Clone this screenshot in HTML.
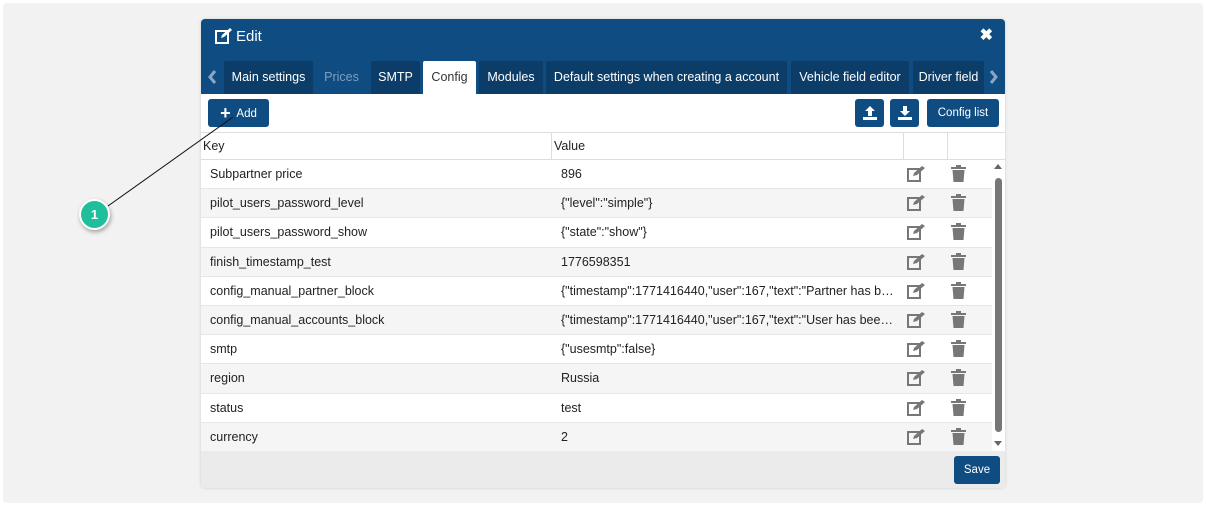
<!DOCTYPE html>
<html><head><style>
*{box-sizing:border-box;margin:0;padding:0}
body{width:1206px;height:506px;background:#fff;font-family:"Liberation Sans",sans-serif;position:relative;overflow:hidden;font-size:12px;color:#222}
.panel{position:absolute;left:3px;top:3px;width:1200px;height:500px;background:#f2f2f2;border-radius:4px}
.dlg{position:absolute;left:201px;top:19px;width:804px;height:469px;background:#fff;border-radius:4px;overflow:hidden;box-shadow:0 0 3px rgba(0,0,0,.15)}
.hdr{position:absolute;left:0;top:0;width:804px;height:75px;background:#0f4c81}
.title{position:absolute;left:35px;top:8px;color:#fff;font-size:15px}
.tab{position:absolute;top:42px;height:33px;line-height:33px;color:#fff;font-size:12.5px;background:#0c3d69;text-align:center;border-radius:2px 2px 0 0}
.btn{position:absolute;background:#0f4c81;color:#fff;border-radius:3px;font-size:11.5px;text-align:center}
.row{position:absolute;left:0;width:791px;height:29.3px;line-height:29px;border-bottom:1px solid #e6e6e6;font-size:12.5px}
.row .k{position:absolute;left:9px}.row .v{position:absolute;left:360px;width:335px;white-space:nowrap;overflow:hidden;text-overflow:ellipsis}
.ic{position:absolute;top:5px}
</style></head><body>
<div class="panel"></div>
<div class="dlg">
<div class="hdr">
<svg style="position:absolute;left:14px;top:9px" width="18" height="16" viewBox="0 0 18 16"><rect x="1" y="3" width="12" height="12" fill="none" stroke="#fff" stroke-width="2"/><path d="M6 10 L7 7 L15 0 L17 2 L9 9 Z" fill="#fff"/></svg>
<div class="title" style="top:9px">Edit</div>
<div style="position:absolute;right:12px;top:6px;color:#fff;font-size:16px;font-weight:bold">✖</div>
<svg style="position:absolute;left:7px;top:51px" width="9" height="14" viewBox="0 0 9 14"><path d="M7 1 L2 7 L7 13" fill="none" stroke="#8aa6c4" stroke-width="3"/></svg>
<div class="tab" style="left:23px;width:89px">Main settings</div>
<div class="tab" style="left:115px;width:51px;background:none;color:#7f9fbf">Prices</div>
<div class="tab" style="left:170px;width:49px">SMTP</div>
<div class="tab" style="left:222px;width:53px;background:#fff;color:#333">Config</div>
<div class="tab" style="left:278px;width:64px">Modules</div>
<div class="tab" style="left:345px;width:241px">Default settings when creating a account</div>
<div class="tab" style="left:590px;width:118px">Vehicle field editor</div>
<div class="tab" style="left:712px;width:71px">Driver field</div>
<svg style="position:absolute;left:788px;top:51px" width="9" height="14" viewBox="0 0 9 14"><path d="M2 1 L7 7 L2 13" fill="none" stroke="#8aa6c4" stroke-width="3"/></svg>
</div>
<div class="btn" style="left:7px;top:80px;width:61px;height:28px;line-height:28px"><span style="font-size:18px;font-weight:bold;vertical-align:-2px">+</span>&nbsp; Add</div>
<div class="btn" style="left:654px;top:80px;width:29px;height:28px"><svg width="16" height="16" style="margin-top:6px" viewBox="0 0 16 16"><path d="M8 1 L13 6 L10 6 L10 11 L6 11 L6 6 L3 6Z" fill="#fff"/><rect x="1" y="12" width="14" height="3" fill="#fff"/></svg></div>
<div class="btn" style="left:689px;top:80px;width:29px;height:28px"><svg width="16" height="16" style="margin-top:6px" viewBox="0 0 16 16"><path d="M6 1 L10 1 L10 6 L13 6 L8 11 L3 6 L6 6Z" fill="#fff"/><rect x="1" y="12" width="14" height="3" fill="#fff"/></svg></div>
<div class="btn" style="left:726px;top:80px;width:72px;height:28px;line-height:28px">Config list</div>
<div style="position:absolute;left:0;top:113px;width:804px;height:28px;border-top:1px solid #ddd;border-bottom:1px solid #ddd;line-height:26px;font-size:12.5px">
<span style="position:absolute;left:2px">Key</span><span style="position:absolute;left:353px">Value</span>
<div style="position:absolute;left:350px;top:0;height:27px;border-left:1px solid #ddd"></div>
<div style="position:absolute;left:702px;top:0;height:27px;border-left:1px solid #ddd"></div>
<div style="position:absolute;left:746px;top:0;height:27px;border-left:1px solid #ddd"></div>
</div>
<div id="rows"></div>
<div style="position:absolute;left:793px;top:145px;width:9px;height:285px">
<div style="position:absolute;left:0;top:0;border:4px solid transparent;border-bottom:5px solid #666;border-top:0;width:0"></div>
<div style="position:absolute;left:1px;top:14px;width:7px;height:254px;background:#777;border-radius:4px"></div>
<div style="position:absolute;left:0;top:277px;border:4px solid transparent;border-top:5px solid #666;border-bottom:0;width:0"></div>
</div>
<div style="position:absolute;left:0;top:432px;width:804px;height:37px;background:#ebebeb"></div>
<div class="btn" style="left:753px;top:437px;width:46px;height:28px;line-height:28px">Save</div>
</div>
<svg style="position:absolute;left:0;top:0" width="1206" height="506"><line x1="108" y1="206" x2="233" y2="117" stroke="#111" stroke-width="1"/></svg>
<div style="position:absolute;left:79px;top:199px;width:31px;height:31px;border-radius:50%;background:#1fbf9b;border:2px solid #fff;box-shadow:1px 2px 4px rgba(0,0,0,.35);color:#fff;font-weight:bold;font-size:13px;text-align:center;line-height:27px">1</div>
<script>
var d=[["Subpartner price","896"],["pilot_users_password_level",'{"level":"simple"}'],["pilot_users_password_show",'{"state":"show"}'],["finish_timestamp_test","1776598351"],["config_manual_partner_block",'{"timestamp":1771416440,"user":167,"text":"Partner has been blocked"}'],["config_manual_accounts_block",'{"timestamp":1771416440,"user":167,"text":"User has been blocked"}'],["smtp",'{"usesmtp":false}'],["region","Russia"],["status","test"],["currency","2"]];
var h="";d.forEach(function(r,i){h+='<div class="row" style="top:'+(141+i*29.2)+'px;background:'+(i%2?'#f5f5f5':'#fff')+'"><span class="k">'+r[0]+'</span><span class="v"></span>'+
'<svg class="ic" style="left:706px" width="19" height="17" viewBox="0 0 19 17"><rect x="1" y="4" width="12" height="12" fill="none" stroke="#777" stroke-width="2"/><path d="M6 11 L7 8 L15 1 L18 3 L10 10Z" fill="#777"/></svg>'+
'<svg class="ic" style="left:750px" width="15" height="17" viewBox="0 0 15 17"><rect x="0" y="2" width="15" height="2" fill="#777"/><rect x="5" y="0" width="5" height="2" fill="#777"/><path d="M1.5 5 H13.5 L12.5 17 H2.5Z" fill="#777"/></svg></div>';});
document.getElementById("rows").innerHTML=h;
var vs=document.querySelectorAll(".row .v");d.forEach(function(r,i){vs[i].textContent=r[1];});
</script>
</body></html>
